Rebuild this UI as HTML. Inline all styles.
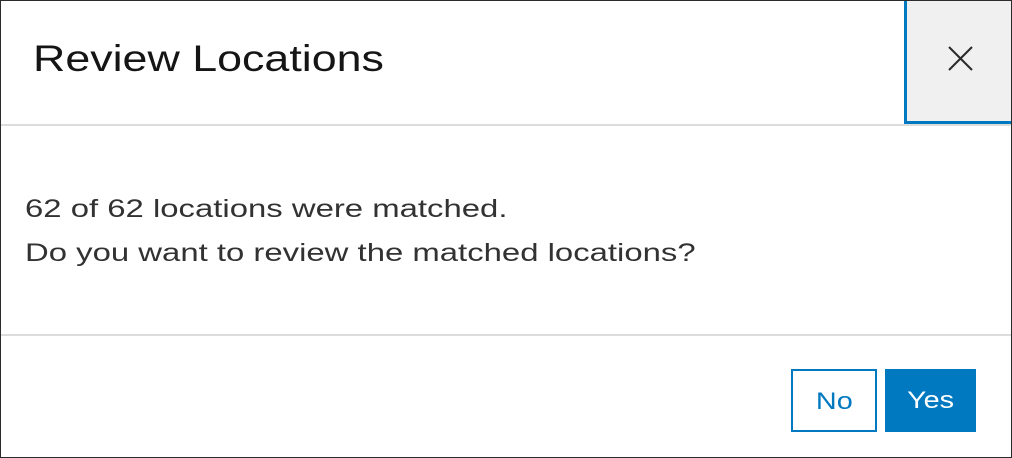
<!DOCTYPE html>
<html><head><style>
body{margin:0;width:1012px;height:458px;overflow:hidden;background:#fff;font-family:"Liberation Sans",sans-serif;}
.frame{position:absolute;left:0;top:0;width:1010px;height:456px;border:1px solid #2b2b2b;}
.title{position:absolute;left:33px;top:37px;font-size:37px;color:#151515;line-height:44px;transform:scaleX(1.21);transform-origin:0 0;white-space:nowrap;}
.close{position:absolute;left:904px;top:1px;width:104px;height:120px;background:#f0f0f0;border-left:3px solid #0079c1;border-bottom:3px solid #0079c1;}
.sep{position:absolute;left:1px;width:1010px;height:2px;background:#dcdcdc;}
.body{position:absolute;left:25px;top:187px;font-size:25px;color:#323232;line-height:44px;transform:scaleX(1.315);transform-origin:0 0;white-space:nowrap;}
.btn{position:absolute;top:369px;height:63px;box-sizing:border-box;font-size:24px;text-align:center;line-height:61px;}
.btn span{display:inline-block;transform:scaleX(1.2);}
</style></head><body>
<div class="frame"></div>
<div class="title">Review Locations</div>
<div class="close"><svg width="104" height="120" style="position:absolute;left:0;top:0"><line x1="42" y1="46" x2="65" y2="69" stroke="#2b2b2b" stroke-width="2"/><line x1="65" y1="46" x2="42" y2="69" stroke="#2b2b2b" stroke-width="2"/></svg></div>
<div class="sep" style="top:124px"></div>
<div class="body">62 of 62 locations were matched.<br>Do you want to review the matched locations?</div>
<div class="sep" style="top:334px"></div>
<div class="btn" style="left:791px;width:86px;border:2px solid #0079c1;color:#0079c1;"><span>No</span></div>
<div class="btn" style="left:885px;width:91px;background:#0079c1;color:#fff;line-height:63px;"><span>Yes</span></div>
</body></html>
